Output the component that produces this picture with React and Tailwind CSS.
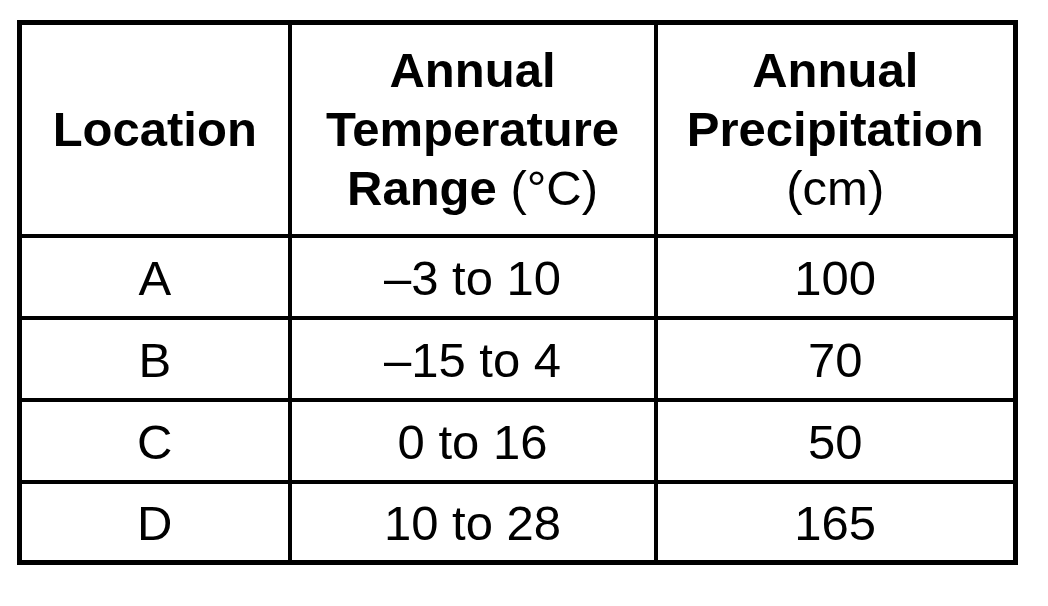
import React from 'react';

const rows = [
  ['A', '\u20133 to 10', '100'],
  ['B', '\u201315 to 4', '70'],
  ['C', '0 to 16', '50'],
  ['D', '10 to 28', '165'],
];

export default function App() {
  return (
    <div className="min-h-screen w-full bg-white pl-[17px] pt-[20px] font-['Liberation_Sans',Arial,sans-serif] text-black">
      <table className="w-[996px] table-fixed border-collapse border-[5px] border-black text-center text-[49px] leading-[59px]">
        <colgroup>
          <col className="w-[270px]" />
          <col className="w-[366px]" />
          <col className="w-[360px]" />
        </colgroup>
        <thead>
          <tr className="h-[213px]">
            <th className="border-4 border-black font-bold">Location</th>
            <th className="border-4 border-black font-bold">
              Annual
              <br />
              Temperature
              <br />
              Range <span className="font-normal">(°C)</span>
            </th>
            <th className="border-4 border-black font-bold">
              Annual
              <br />
              Precipitation
              <br />
              <span className="font-normal">(cm)</span>
            </th>
          </tr>
        </thead>
        <tbody>
          {rows.map((r, i) => (
            <tr key={r[0]} className={i === 3 ? 'h-[81px]' : 'h-[82px]'}>
              {r.map((c, j) => (
                <td key={j} className="border-4 border-black pt-[4px]">
                  {c}
                </td>
              ))}
            </tr>
          ))}
        </tbody>
      </table>
    </div>
  );
}
